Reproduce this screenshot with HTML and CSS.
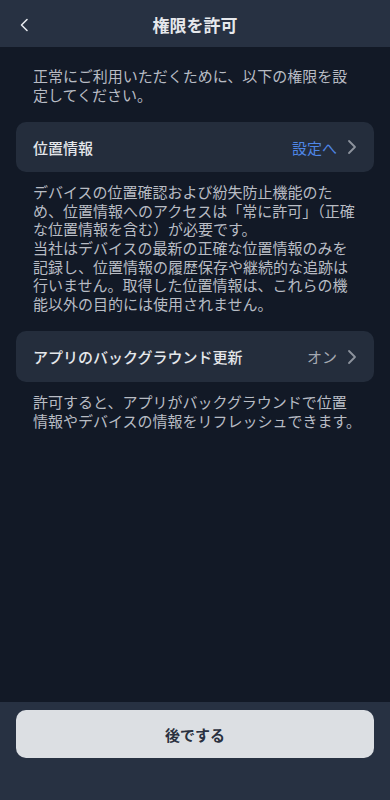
FILE: index.html
```html
<!DOCTYPE html>
<html lang="ja">
<head>
<meta charset="utf-8">
<meta name="viewport" content="width=device-width, initial-scale=1">
<link rel="stylesheet" href="styles.css">
</head>
<body>
<div class="screen">
  <header class="topbar">
    <button class="back" aria-label="戻る">
      <svg width="10" height="14" viewBox="0 0 10 14"><path d="M8 1.5 L2.5 7 L8 12.5" fill="none" stroke="#e4e7ec" stroke-width="1.6" stroke-linecap="round" stroke-linejoin="round"/></svg>
    </button>
    <h1 class="title">権限を許可</h1>
  </header>
  <main class="content">
    <p class="intro">正常にご利用いただくために、以下の権限を設<br>定してください。</p>

    <div class="card">
      <span class="card-label">位置情報</span>
      <span class="card-value link">設定へ</span>
      <svg class="chev" width="10" height="16" viewBox="0 0 10 16"><path d="M2 2 L8 8 L2 14" fill="none" stroke="#8d939d" stroke-width="1.8" stroke-linecap="round" stroke-linejoin="round"/></svg>
    </div>
    <p class="desc">デバイスの位置確認および紛失防止機能のた<br>め、位置情報へのアクセスは「常に許可」（正確<br>な位置情報を含む）が必要です。<br>当社はデバイスの最新の正確な位置情報のみを<br>記録し、位置情報の履歴保存や継続的な追跡は<br>行いません。取得した位置情報は、これらの機<br>能以外の目的には使用されません。</p>

    <div class="card card-2">
      <span class="card-label">アプリのバックグラウンド更新</span>
      <span class="card-value">オン</span>
      <svg class="chev" width="10" height="16" viewBox="0 0 10 16"><path d="M2 2 L8 8 L2 14" fill="none" stroke="#8d939d" stroke-width="1.8" stroke-linecap="round" stroke-linejoin="round"/></svg>
    </div>
    <p class="desc">許可すると、アプリがバックグラウンドで位置<br>情報やデバイスの情報をリフレッシュできます。</p>
  </main>
  <footer class="bottom">
    <button class="later">後でする</button>
  </footer>
</div>
</body>
</html>
```
FILE: styles.css
```css
* { box-sizing: border-box; }
html, body { margin: 0; padding: 0; }
body {
  background: #121926;
  font-family: "Noto Sans CJK JP", "Noto Sans", sans-serif;
  color: #b6bac2;
}
.screen {
  width: 390px;
  height: 800px;
  display: flex;
  flex-direction: column;
  background: #121926;
}
.topbar {
  height: 47px;
  flex: none;
  background: #273142;
  display: flex;
  align-items: center;
  justify-content: center;
  position: relative;
}
.back {
  position: absolute;
  left: 15px;
  top: 16px;
  width: 18px;
  height: 18px;
  padding: 0;
  border: 0;
  background: none;
  display: flex;
  align-items: center;
  justify-content: center;
}
.title {
  margin: 0;
  font-size: 17px;
  font-weight: 700;
  color: #e6e8ec;
  line-height: 24px;
  margin-top: 2px;
}
.content {
  flex: 1;
  padding: 20px 16px 0;
}
.intro, .desc {
  margin: 0;
  padding: 0 17px;
  font-size: 15px;
  line-height: 18.6px;
  white-space: nowrap;
  color: #b8bcc4;
}
.intro { margin-bottom: 18px; }
.card {
  height: 50px;
  background: #242d3c;
  border-radius: 10px;
  display: flex;
  align-items: center;
  padding: 0 17px;
  margin-bottom: 11px;
}
.card-2 { margin-top: 18px; height: 51px; }
.card-label {
  flex: 1;
  font-size: 15px;
  font-weight: 500;
  color: #e4e7eb;
}
.card-value {
  font-size: 15px;
  color: #a4a9b2;
  margin-right: 10px;
}
.card-value.link { color: #4f86e6; }
.chev { flex: none; }
.bottom {
  flex: none;
  height: 98px;
  background: #273142;
  padding: 8px 16px 0;
}
.later {
  width: 100%;
  height: 48px;
  border: 0;
  border-radius: 10px;
  background: #dcdfe3;
  font-family: "Noto Sans CJK JP", "Noto Sans", sans-serif;
  font-size: 15px;
  font-weight: 700;
  color: #2a3140;
}
```
